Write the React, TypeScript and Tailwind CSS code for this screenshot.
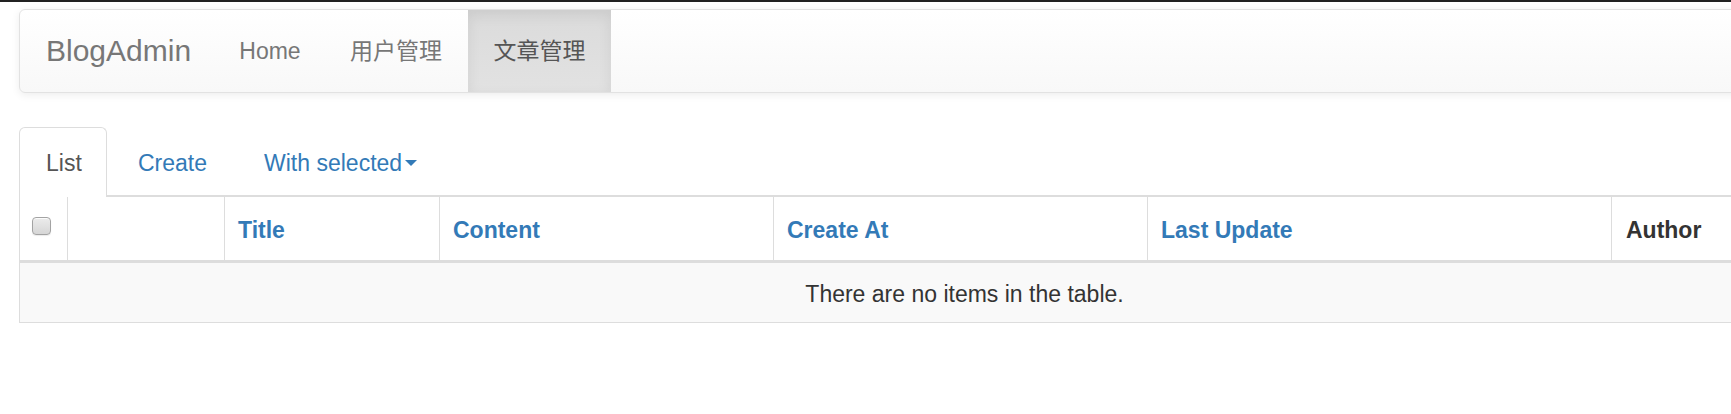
const navItems = [
  { label: "Home", width: "w-[108px]", active: false },
  { label: "用户管理", width: "w-[144px]", active: false },
  { label: "文章管理", width: "w-[143px]", active: true },
];

const columns = [
  { label: "Title", link: true },
  { label: "Content", link: true },
  { label: "Create At", link: true },
  { label: "Last Update", link: true },
  { label: "Author", link: false },
];

const Checkbox = () => (
  <span className="block w-[19px] h-[18px] rounded-[4px] border border-[#a3a3a3] bg-gradient-to-b from-[#ececec] to-[#d6d6d6] shadow-[inset_0_1px_0_rgba(255,255,255,0.8),0_1px_1px_rgba(0,0,0,0.08)]" />
);

const App = () => {
  return (
    <div className="w-full h-[414px] overflow-hidden bg-white text-[#333] text-[23px] leading-[32px] font-['Liberation_Sans','Noto_Sans_CJK_SC',sans-serif]">
      <div className="h-[2px] bg-[#222]" />
      <div className="w-[1890px] ml-[19px]">
        {/* navbar */}
        <nav className="mt-[7px] h-[84px] flex rounded-[6px] border border-[#e2e2e2] bg-gradient-to-b from-white to-[#f8f8f8] shadow-[0_2px_8px_rgba(0,0,0,0.075)] overflow-hidden">
          <a className="w-[196px] pl-[26px] flex items-center text-[30px] leading-[32px] text-[#777]">
            BlogAdmin
          </a>
          {navItems.map((item) => (
            <a
              key={item.label}
              className={
                item.active
                  ? `${item.width} flex items-center justify-center text-[#555] bg-gradient-to-b from-[#dbdbdb] to-[#e2e2e2] shadow-[inset_0_5px_14px_rgba(0,0,0,0.075)]`
                  : `${item.width} flex items-center justify-center text-[#777]`
              }
            >
              {item.label}
            </a>
          ))}
        </nav>

        {/* tabs */}
        <ul className="mt-[34px] flex border-b-2 border-[#ddd]">
          <li className="-mb-[2px] w-[88px] h-[70px] border border-b-0 border-[#ddd] rounded-t-[6px] bg-white pl-[26px] pt-[19px] text-[#555]">
            List
          </li>
          <li className="ml-[4px] px-[27px] pt-[20px] text-[#337ab7]">Create</li>
          <li className="ml-[3px] px-[27px] pt-[20px] h-[52px] flex items-start text-[#337ab7]">
            <span className="flex items-center h-[32px]">
              With selected
              <span className="ml-[3px] w-0 h-0 border-t-[6px] border-t-[#337ab7] border-x-[6px] border-x-transparent" />
            </span>
          </li>
        </ul>

        {/* table */}
        <div className="border-l border-[#ddd]">
          <div className="grid grid-cols-[47px_157px_215px_334px_374px_464px_298px] h-[66px] border-b-[3px] border-[#ddd] font-bold">
            <div className="pl-[12px] pt-[20px]">
              <Checkbox />
            </div>
            <div className="border-l border-[#ddd]" />
            {columns.map((col) => (
              <div
                key={col.label}
                className={
                  col.link
                    ? "border-l border-[#ddd] pl-[13px] pt-[2px] flex items-center text-[#337ab7]"
                    : "border-l border-[#ddd] pl-[14px] pt-[2px] flex items-center text-[#333]"
                }
              >
                {col.label}
              </div>
            ))}
          </div>
          <div className="h-[60px] pt-[2px] bg-[#f9f9f9] border-b border-[#ddd] flex items-center justify-center">
            There are no items in the table.
          </div>
        </div>
      </div>
    </div>
  );
};

export default App;
